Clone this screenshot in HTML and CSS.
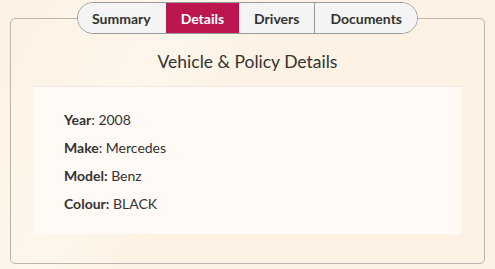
FILE: index.html
```html
<!DOCTYPE html>
<html lang="en">
<head>
  <meta charset="UTF-8">
  <meta name="viewport" content="width=device-width, initial-scale=1.0">
  <title>Vehicle Details</title>
  <link rel="stylesheet" href="styles.css">
</head>
<body>
  <fieldset class="panel">
    <legend class="tabs">
      <button class="tab">Summary</button>
      <button class="tab active">Details</button>
      <button class="tab">Drivers</button>
      <button class="tab">Documents</button>
    </legend>

    <h2 class="heading">Vehicle &amp; Policy Details</h2>

    <div class="details">
      <p class="row"><b>Year</b>: 2008</p>
      <p class="row"><b>Make</b>: Mercedes</p>
      <p class="row"><b>Model:</b> Benz</p>
      <p class="row"><b>Colour:</b> BLACK</p>
    </div>
  </fieldset>
</body>
</html>
```

FILE: styles.css
```css
body{
  margin: 0;
  padding: 2px 10px 0;
  font-family: Lato, "Open Sans", sans-serif;
  color: #333;
  background-color: #fdf2e3;
  background-image: linear-gradient(120deg, #fdf2e3 0%, #fef6ec 30%, #fdf2e3 45%, #fdf2e3 100%);
  height: 267px;
}

.panel{
  margin: 0;
  padding: 0 23px 29px;
  border: 1px solid #b9b5b0;
  border-radius: 5px;
  min-width: 0;
}

.tabs{
  display: flex;
  margin: 0 auto;
  padding: 0;
  border: 1px solid #9a9a9a;
  border-radius: 16px;
  overflow: hidden;
  background-color: #f4f4f4;
}

.tab{
  font-family: inherit;
  font-size: 14px;
  font-weight: bold;
  color: #333;
  background-color: #f4f4f4;
  border: none;
  border-left: 1px solid #9a9a9a;
  height: 30px;
  padding: 0 15px;
  cursor: pointer;
}
.tab:first-child{
  border-left: none;
  padding-left: 14px;
}
.tab.active{
  background-color: #bb164f;
  color: white;
  border-left: none;
}
.tab.active + .tab{
  border-left: none;
}

.heading{
  margin: 18px 0 14px;
  text-align: center;
  font-size: 17.5px;
  font-weight: normal;
  line-height: 20px;
}

.details{
  background-color: #fffaf6;
  border-top: 1px solid #f1e9e1;
  padding: 23px 30px 20px;
}

.row{
  margin: 0 0 8px;
  font-size: 14px;
  line-height: 20px;
}
.row:last-child{
  margin-bottom: 0;
}
```
